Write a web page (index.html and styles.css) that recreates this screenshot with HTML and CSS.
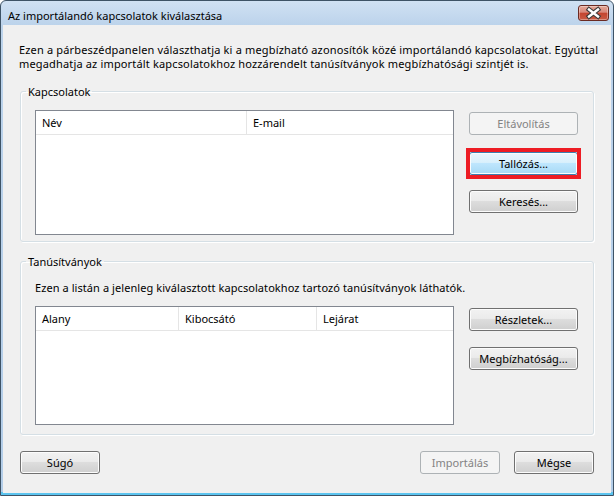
FILE: index.html
```html
<!DOCTYPE html>
<html lang="hu">
<head>
<meta charset="utf-8">
<title>Az importálandó kapcsolatok kiválasztása</title>
<link rel="stylesheet" href="styles.css">
</head>
<body>
<div class="window">
  <div class="titlebar">
    <span class="title">Az importálandó kapcsolatok kiválasztása</span>
    <button class="close" aria-label="Bezárás">
      <svg width="31" height="16" viewBox="0 0 31 16">
        <path d="M11 4.5 L20 11.5 M20 4.5 L11 11.5" stroke="#3a3a3a" stroke-width="4.6" stroke-linecap="square" fill="none"/>
        <path d="M11 4.5 L20 11.5 M20 4.5 L11 11.5" stroke="#ffffff" stroke-width="2.4" stroke-linecap="square" fill="none"/>
      </svg>
    </button>
  </div>
  <div class="client">
    <p class="intro">Ezen a párbeszédpanelen választhatja ki a megbízható azonosítók közé importálandó kapcsolatokat. Egyúttal<br>megadhatja az importált kapcsolatokhoz hozzárendelt tanúsítványok megbízhatósági szintjét is.</p>

    <fieldset class="group group-contacts">
      <legend>Kapcsolatok</legend>
      <div class="row">
        <div class="list list-contacts">
          <div class="head">
            <div class="col col-name">Név</div>
            <div class="col col-mail">E-mail</div>
          </div>
        </div>
        <div class="btns">
          <button class="btn disabled first">Eltávolítás</button>
          <div class="hl"><button class="btn hot">Tallózás...</button></div>
          <button class="btn search">Keresés...</button>
        </div>
      </div>
    </fieldset>

    <fieldset class="group group-certs">
      <legend>Tanúsítványok</legend>
      <p class="desc">Ezen a listán a jelenleg kiválasztott kapcsolatokhoz tartozó tanúsítványok láthatók.</p>
      <div class="row">
        <div class="list list-certs">
          <div class="head">
            <div class="col col-subject">Alany</div>
            <div class="col col-issuer">Kibocsátó</div>
            <div class="col col-exp">Lejárat</div>
          </div>
        </div>
        <div class="btns">
          <button class="btn first">Részletek...</button>
          <button class="btn trust">Megbízhatóság...</button>
        </div>
      </div>
    </fieldset>

    <div class="footer">
      <button class="btn small">Súgó</button>
      <span class="spacer"></span>
      <button class="btn small disabled">Importálás</button>
      <button class="btn small">Mégse</button>
    </div>
  </div>
</div>
</body>
</html>
```
FILE: styles.css
```css
* { box-sizing: border-box; }
html, body { margin: 0; padding: 0; }
body {
  width: 614px;
  height: 496px;
  overflow: hidden;
  background: #ffffff;
  font-family: "Noto Sans", "Open Sans", sans-serif;
  font-size: 11px;
  line-height: 13px;
  color: #000;
}
.window {
  width: 614px;
  height: 496px;
  display: flex;
  flex-direction: column;
  border: 1px solid #3e5366;
  border-radius: 6px 6px 0 0;
  padding: 0 2px 2px;
  background: linear-gradient(#d0e1f3 0, #bcd3eb 24px, #b3cde8 calc(100% - 3px), #5cc4ef calc(100% - 3px));
}
.titlebar {
  height: 24px;
  display: flex;
  align-items: flex-start;
  padding-left: 5px;
}
.title {
  flex: 1;
  margin-top: 8px;
  white-space: nowrap;
}
.close {
  width: 31px;
  height: 16px;
  margin: 4px 2px 0 0;
  padding: 0;
  border: 1px solid #6b2a22;
  border-radius: 3px;
  background: linear-gradient(#e4a898 0, #d8877a 45%, #c4442f 50%, #c95b45 100%);
  box-shadow: inset 0 0 0 1px rgba(255,255,255,0.35);
  display: flex;
  align-items: center;
  justify-content: center;
}
.close svg { display: block; margin: -1px; }
.client {
  flex: 1;
  background: #f0f0f0;
  padding: 18px 17px 0 17px;
  display: flex;
  flex-direction: column;
}
.intro {
  margin: 0 0 0 -1px;
  line-height: 14px;
  letter-spacing: 0.16px;
  white-space: nowrap;
}
.group {
  margin: 0;
  border: 1px solid #d5dfe5;
  border-radius: 3px;
  box-shadow: inset 1px 1px 0 #ffffff, 1px 1px 0 #ffffff;
  min-inline-size: 0;
}
.group legend {
  padding: 0 2px;
  margin-left: -9px;
  line-height: 13px;
}
.group-contacts {
  margin-top: 14px;
  padding: 12px 15px 6px 14px;
}
.group-certs {
  margin-top: 13px;
  padding: 13px 15px 9px 14px;
}
.desc {
  margin: 0;
  letter-spacing: 0.07px;
  white-space: nowrap;
}
.row {
  display: flex;
  gap: 15px;
}
.group-certs .row { margin-top: 12px; }
.list {
  width: 419px;
  border: 1px solid #828790;
  background: #ffffff;
}
.list-contacts { height: 125px; }
.list-certs { height: 119px; }
.head {
  display: flex;
  height: 24px;
  border-bottom: 1px solid #e5e5e5;
}
.col {
  line-height: 23px;
  padding-left: 6px;
  white-space: nowrap;
}
.col-name { width: 211px; border-right: 1px solid #e5e5e5; }
.col-mail { flex: 1; }
.col-subject { width: 143px; border-right: 1px solid #e5e5e5; }
.col-issuer { width: 138px; border-right: 1px solid #e5e5e5; }
.col-exp { flex: 1; }
.btns {
  width: 109px;
  display: flex;
  flex-direction: column;
}
.btn {
  width: 109px;
  height: 23px;
  padding: 0;
  border: 1px solid #707070;
  border-radius: 3px;
  background: linear-gradient(#f2f2f2 0, #ebebeb 45%, #dddddd 50%, #cfcfcf 100%);
  box-shadow: inset 0 0 0 1px #fcfcfc;
  font: inherit;
  color: #000;
  display: flex;
  align-items: center;
  justify-content: center;
}
.btn.disabled {
  border-color: #adb2b5;
  background: #f4f4f4;
  box-shadow: none;
  color: #838383;
}
.btn.hot {
  border-color: #3c7fb1;
  background: linear-gradient(#eaf6fd 0, #d9f0fc 45%, #bee6fd 50%, #a7d9f5 100%);
}
.btns .first { margin-top: 2px; }
.hl {
  position: relative;
  margin-top: 17px;
}
.hl::after {
  content: "";
  position: absolute;
  top: -4px;
  bottom: -4px;
  left: -3px;
  right: -3px;
  border: 4px solid #ed1c24;
  pointer-events: none;
}
.search { margin-top: 15px; }
.trust { margin-top: 16px; }
.footer {
  margin-top: 16px;
  display: flex;
  gap: 14px;
}
.btn.small { width: 80px; }
.spacer { flex: 1; }
```
